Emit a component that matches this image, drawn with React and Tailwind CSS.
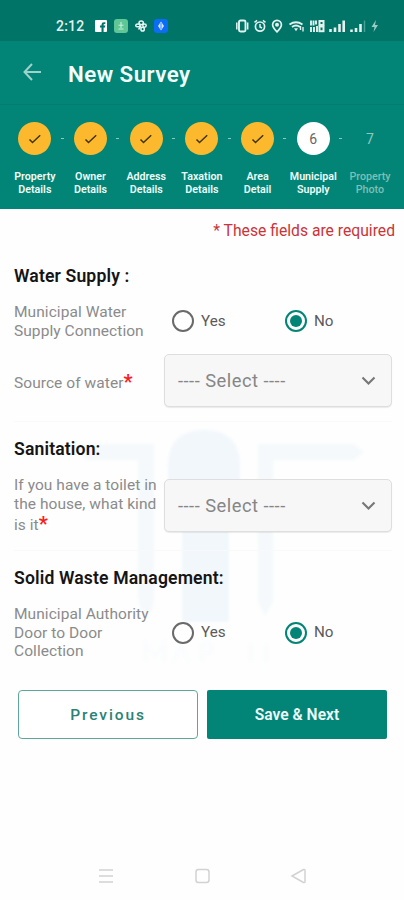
const steps = [
  { label: ["Property", "Details"], done: true },
  { label: ["Owner", "Details"], done: true },
  { label: ["Address", "Details"], done: true },
  { label: ["Taxation", "Details"], done: true },
  { label: ["Area", "Detail"], done: true },
  { label: ["Municipal", "Supply"], active: true },
  { label: ["Property", "Photo"] },
];

function StatusBar() {
  return (
    <div className="flex h-[41px] items-center bg-[#007467] pt-[11px] pl-[56px] text-[#e3f1ef]">
      <span className="w-[30px] text-[14px] leading-4 font-medium tracking-[0.2px]">2:12</span>
      <div className="ml-[9px] flex items-center gap-[7px]">
        <svg width="12" height="12" viewBox="0 0 12 12">
          <rect width="12" height="12" rx="1" fill="#fff" />
          <path d="M6.5 12V7.5H5V5.6h1.5V4.4Q6.5 2.2 9 2.2h1.300V4H9.400q-.8 0-.8.7v.9h1.700L10 7.500H8.600V12z" fill="#007467" />
        </svg>
        <svg width="14" height="14" viewBox="0 0 14 14">
          <rect width="14" height="14" rx="3" fill="#5fc795" />
          <path d="M7 3v6M4.5 6.2h5M4.5 10h5" stroke="#c6f0dc" strokeWidth="1.1" fill="none" />
        </svg>
        {/* pinwheel */}
        <svg width="12" height="12" viewBox="0 0 12 12" fill="none" stroke="#e8f5f3" strokeWidth="1.5">
          <ellipse cx="6.2" cy="2.8" rx="2.2" ry="1.9" />
          <ellipse cx="9.5" cy="5.6" rx="1.7" ry="1.7" />
          <ellipse cx="7.6" cy="9.2" rx="1.7" ry="1.9" />
          <ellipse cx="2.9" cy="5.4" rx="2.2" ry="1.4" />
          <path d="M6 6L3.5 9.5" />
        </svg>
        <svg width="14" height="14" viewBox="0 0 14 14">
          <rect width="14" height="14" rx="3" fill="#0b6cf5" />
          <path d="M7 2.5l3 4.5-3 4.5L4 7z" fill="#d5e6ff" />
          <path d="M7 4v6" stroke="#0b6cf5" strokeWidth=".8" />
        </svg>
      </div>
      <svg className="ml-[67px]" width="146" height="14" viewBox="0 0 146 14" fill="none" stroke="#e3f1ef">
        {/* vibrate */}
        <rect x="4" y="1.5" width="6.5" height="11" rx="1.5" strokeWidth="1.9" />
        <path d="M1.8 3.5v7M12.7 3.5v7" strokeWidth="1.5" />
        {/* alarm */}
        <circle cx="25" cy="7.6" r="4.6" strokeWidth="1.7" />
        <path d="M25 5v3l2 1M19.5 3.3l2.6-2M30.5 3.3l-2.6-2" strokeWidth="1.5" />
        {/* location */}
        <path d="M42 12.8C39 10 37.6 8 37.6 5.8a4.4 4.4 0 0 1 8.8 0C46.4 8 45 10 42 12.8z" strokeWidth="1.7" />
        <circle cx="42" cy="5.8" r="2" fill="#e3f1ef" stroke="none" />
        {/* wifi */}
        <path d="M54.5 5.5q6.5-4.5 13 0M57 8q4-3 8 0" strokeWidth="1.8" />
        <path d="M59 9.2h4l-2 3z" fill="#e3f1ef" stroke="none" />
        <path d="M65.5 7v4M68 8v4.5" strokeWidth="1.4" />
        {/* network speed */}
        <path d="M76 1.5v5M78.5 1.5v5M81 1.5v4M76 8v5M79 8v5M82 7v6" strokeWidth="1.9" />
        <rect x="84.5" y="2" width="4" height="4" strokeWidth="2" />
        <rect x="84.5" y="7.5" width="4" height="4.7" strokeWidth="2" />
        {/* signal bars */}
        <path d="M95.5 10v3M100 8.5V13M104.5 5v8M108.7 1.5V13M116.5 10.5V13M121 9v4M125.5 5v8" strokeWidth="2.6" />
        <path d="M129.5 1.5V13" stroke="#4a9f95" strokeWidth="1.5" />
        {/* charging */}
        <path d="M141 1l-4.500 7h3l-1 5 4.500-7h-3z" fill="#9ccbc5" stroke="none" />
      </svg>
    </div>
  );
}

function Stepper() {
  return (
    <div className="flex h-[105px] border-t border-[#017d70] bg-[#028576] pt-[17px] pl-[7px]">
      {steps.map((step, i) => (
        <div key={i} className="relative flex w-[55.7px] shrink-0 flex-col items-center">
          {i > 0 && <span className="absolute top-[16px] left-[-2px] h-px w-[3px] bg-[#8cc8c1]" />}
          {step.done && (
            <div className="flex size-[33px] items-center justify-center rounded-full bg-[#fdb92e]">
              <svg width="14" height="12" viewBox="0 0 14 12">
                <path d="M1.5 6.5l3 3L12.2 2.2" fill="none" stroke="#3f3312" strokeWidth="1.5" />
              </svg>
            </div>
          )}
          {step.active && (
            <div className="flex size-[33px] items-center justify-center rounded-full bg-white pt-px text-[14px] text-[#666]">
              {i + 1}
            </div>
          )}
          {!step.done && !step.active && (
            <div className="flex size-[33px] items-center justify-center pt-px pl-[2px] text-[14px] text-[#8fc7c0]">
              {i + 1}
            </div>
          )}
          <div
            className={
              step.done || step.active
                ? "mt-[15px] text-center text-[10.7px] leading-[13px] font-semibold whitespace-nowrap text-[#eefaf8]"
                : "mt-[15px] pl-[2px] text-center text-[10.7px] leading-[13px] font-medium whitespace-nowrap text-[#7fbfb7]"
            }
          >
            {step.label[0]}
            <br />
            {step.label[1]}
          </div>
        </div>
      ))}
    </div>
  );
}

function YesNo() {
  return (
    <div className="flex items-center pl-[8px] text-[15.2px] text-[#5a5a5a]">
      <label className="flex w-[113px] items-center gap-[7px]">
        <span className="size-[22px] rounded-full border-2 border-[#6a6a6a] bg-white" />
        Yes
      </label>
      <label className="flex items-center gap-[7px]">
        <span className="flex size-[22px] items-center justify-center rounded-full border-2 border-[#028576] bg-white">
          <span className="size-[12px] rounded-full bg-[#028576]" />
        </span>
        No
      </label>
    </div>
  );
}

function Select() {
  return (
    <button className="flex h-[53px] w-[228px] shrink-0 items-center justify-between rounded-[5px] border border-[#dedede] bg-[#f7f7f7] pr-[15px] pl-[13px] text-[18.3px] tracking-[0.5px] text-[#868686] shadow-[0_1px_1px_rgba(0,0,0,0.08)]">
      ---- Select ----
      <svg width="15" height="10" viewBox="0 0 15 10">
        <path d="M1.5 1.500l6 6 6-6" fill="none" stroke="#777" strokeWidth="2.1" />
      </svg>
    </button>
  );
}

function Heading({ children }) {
  return <h2 className="text-[17.6px] leading-5 font-semibold tracking-[0.14px] text-[#151515]">{children}</h2>;
}

function Label({ children }) {
  return (
    <div className="w-[150px] shrink-0 text-[15.5px] leading-[18.5px] tracking-[0.06px] whitespace-nowrap text-[#8b8b8b]">
      {children}
    </div>
  );
}

function Required() {
  return <span className="relative top-px text-[20px] leading-none font-bold text-[#fb1d1d]">*</span>;
}

// Faint logo behind the form
function Watermark() {
  return (
    <svg className="absolute top-[210px] left-[60px] -z-10 blur-[1.5px]" width="310" height="260" viewBox="60 419 310 260">
      <path d="M76 444h78v150q0 18-7 20-9-4-9-20V460H86z" fill="#f5f9fb" />
      <path d="M168 488v-22q0-36 36-36t36 36v22h-11v134h-47V488z" fill="#f2f7fc" />
      <path d="M258 444h96l10 8-10 8h-81v142l-8 14-7-14z" fill="#f5f9fb" />
      <path d="M146 662v-18l9 12 9-12v18M173 662l8-18 8 18M202 662v-18h9v9h-9M251 644v18M266 644v18" fill="none" stroke="#fafcfd" strokeWidth="4" />
    </svg>
  );
}

export default function App() {
  return (
    <div className="flex h-[900px] w-[404px] flex-col overflow-hidden bg-[#fefefe] font-[Roboto,'Liberation_Sans',sans-serif]">
      <StatusBar />
      <header className="flex h-[63px] items-center bg-[#028576] pt-[2px] pl-[23px]">
        <svg className="mb-[3px]" width="18" height="18" viewBox="0 0 18 18" fill="none" stroke="#9fd2cc" strokeWidth="2">
          <path d="M9 1L1.5 9 9 17M1.5 9H18" />
        </svg>
        <h1 className="ml-[27px] text-[22.3px] leading-7 font-semibold tracking-[0.45px] text-[#f3fffd]">New Survey</h1>
      </header>
      <Stepper />

      <main className="relative isolate flex-1 px-[14px]">
        <Watermark />
        <p className="-mr-[5px] flex h-[42px] items-center justify-end pt-[2px] text-[15.7px] text-[#cb3438]">
          * These fields are required
        </p>

        <section className="-mr-[2px] h-[171px] border-b border-[#f9f9f9] pt-[15px]">
          <Heading>Water Supply :</Heading>
          <div className="mt-[17px] flex items-center">
            <Label>
              Municipal Water
              <br />
              Supply Connection
            </Label>
            <YesNo />
          </div>
          <div className="mt-[14px] flex items-center">
            <Label>
              <span className="block pt-[2px]">
                Source of water
                <Required />
              </span>
            </Label>
            <Select />
          </div>
        </section>

        <section className="-mr-[2px] h-[129px] border-b border-[#f9f9f9] pt-[17px]">
          <Heading>Sanitation:</Heading>
          <div className="mt-[17px] flex items-start">
            <Label>
              If you have a toilet in
              <br />
              the house, what kind
              <br />
              <span className="block">
                is it
                <Required />
              </span>
            </Label>
            <div className="pt-[3px]">
              <Select />
            </div>
          </div>
        </section>

        <section className="pt-[17px]">
          <Heading>Solid Waste Management:</Heading>
          <div className="mt-[17px] flex items-center">
            <Label>
              Municipal Authority
              <br />
              Door to Door
              <br />
              Collection
            </Label>
            <YesNo />
          </div>
        </section>

        <div className="mt-[29px] flex gap-[9px] px-[4px]">
          <button className="h-[49px] w-[180px] shrink-0 rounded-[4px] border border-[#5fa79d] bg-white pt-[4px] text-[15.5px] font-medium tracking-[1.9px] text-[#2a8275]">
            Previous
          </button>
          <button className="h-[49px] w-[180px] shrink-0 rounded-[2px] bg-[#028576] pt-[4px] text-[15.6px] font-semibold text-[#eefaf8]">
            Save &amp; Next
          </button>
        </div>
      </main>

      <nav className="flex h-[48px] items-center pl-[99px]">
        <svg width="208" height="16" viewBox="0 0 208 16" fill="none" stroke="#d2d2d2" strokeWidth="1.5">
          <path d="M0 2h14M0 8h14M0 14h14" />
          <rect x="97" y="1.5" width="13" height="13" rx="2.5" />
          <path d="M193 8l11.5-6.500q1.500-.5 1.500 1v11q0 1.500-1.500 1z" />
        </svg>
      </nav>
    </div>
  );
}
